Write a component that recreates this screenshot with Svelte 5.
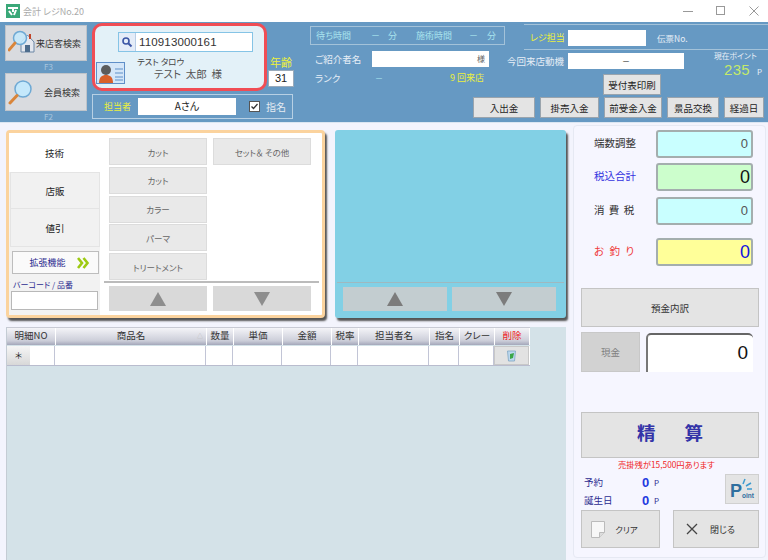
<script>
  const cols = [
    { t: '明細NO', w: 49 }, { t: '商品名', w: 151, sort: true }, { t: '数量', w: 27 }, { t: '単価', w: 49 },
    { t: '金額', w: 49 }, { t: '税率', w: 27 }, { t: '担当者名', w: 71 }, { t: '指名', w: 30 }, { t: 'クレー', w: 35 }, { t: '削除', w: 35, red: true }
  ];
  const menu = ['カット', 'カット', 'カラー', 'パーマ', 'トリートメント'];
  const bottom = [
    { t: '入出金', w: 62 }, { t: '掛売入金', w: 59 }, { t: '前受金入金', w: 58 }, { t: '景品交換', w: 52 }, { t: '経過日', w: 40 }
  ];
</script>

<div class="win">
  <div class="title">
    <svg class="appicon" width="14" height="14" viewBox="0 0 14 14"><rect width="14" height="14" fill="#3aa878"/><path d="M2 4h10M3 7l3 4M10 6l-2 5M7 3v5" stroke="#fff" stroke-width="2" fill="none"/></svg>
    <span class="ttext">会計 レジNo.20</span>
    <div class="ctrls">
      <svg width="12" height="12" viewBox="0 0 12 12"><path d="M1 6.500h10" stroke="#999"/></svg>
      <svg width="12" height="12" viewBox="0 0 12 12"><rect x="1.500" y="1.500" width="8" height="8" fill="none" stroke="#999"/></svg>
      <svg width="12" height="12" viewBox="0 0 12 12"><path d="M1.500 1.500l9 9M10.500 1.500l-9 9" stroke="#999"/></svg>
    </div>
  </div>

  <header class="head">
    <div class="c1">
      <button class="sbtn">
        <svg width="27" height="28" viewBox="0 0 27 28">
          <path d="M13 13l6.500-7 6.500 7v10H13z" fill="#e4e8ef" stroke="#6d88a6"/>
          <rect x="17" y="16" width="5" height="7" fill="#4d6c8c"/>
          <path d="M22 5v5" stroke="#c0452a" stroke-width="2"/>
          <circle cx="12" cy="9" r="6.500" fill="#c4e8fb" fill-opacity=".9" stroke="#6ea9d4" stroke-width="1.500"/>
          <path d="M7 14L1 21" stroke="#d9853a" stroke-width="2.800" stroke-linecap="round"/>
        </svg>
        <span>来店客検索</span>
      </button>
      <div class="fk">F3</div>
      <button class="sbtn second">
        <svg width="28" height="28" viewBox="0 0 28 28">
          <circle cx="15" cy="11" r="8" fill="#c4e8fb" stroke="#6ea9d4" stroke-width="1.500"/>
          <path d="M9 17.500L2 25" stroke="#d9853a" stroke-width="3" stroke-linecap="round"/>
        </svg>
        <span class="pad">会員検索</span>
      </button>
      <div class="fk">F2</div>
    </div>

    <div class="c2">
      <div class="c2top">
        <div class="card">
          <div class="search">
            <span class="lens"><svg width="12" height="12" viewBox="0 0 12 12"><circle cx="5" cy="5" r="3" fill="none" stroke="#3b55a5" stroke-width="1.600"/><path d="M7.500 7.500l3 3" stroke="#3b55a5" stroke-width="2"/></svg></span>
            <span class="num">110913000161</span>
          </div>
          <div class="who">
            <svg class="idc" width="29" height="22" viewBox="0 0 29 22">
              <rect x="0.500" y="0.500" width="28" height="21" fill="#d4e6f8" stroke="#5f8fc8"/>
              <path d="M3 21c0-6 3-8 7-8s7 2 7 8z" fill="#d8602a"/>
              <circle cx="10" cy="8" r="5" fill="#5c5c5c"/>
              <path d="M19 7h8M19 11h8M19 15h8M19 18h8" stroke="#5f8fc8" stroke-width="1.200"/>
            </svg>
            <div class="names">
              <div class="kana">テスト タロウ</div>
              <div class="kanji">テスト&nbsp;&nbsp;太郎 &nbsp;様</div>
            </div>
          </div>
        </div>
        <div class="age">
          <div class="yl agel">年齢</div>
          <div class="agev">31</div>
        </div>
      </div>
      <div class="staff">
        <span class="yl stl">担当者</span>
        <span class="staffv">Aさん</span>
        <span class="chk"><svg width="11" height="11" viewBox="0 0 11 11"><rect x="0.500" y="0.500" width="10" height="10" fill="#fff" stroke="#555"/><path d="M2.500 5.500l2 2 4-4.500" fill="none" stroke="#333" stroke-width="1.300"/></svg></span>
        <span class="shimei">指名</span>
      </div>
    </div>

    <div class="cr">
      <div class="crtop">
        <div class="c3">
          <div class="wait">
            <span class="w1">待ち時間</span><span class="w2">－</span><span class="w3">分</span>
            <span class="w4">施術時間</span><span class="w5">－</span><span class="w6">分</span>
          </div>
          <div class="intro">
            <span class="lbl">ご紹介者名</span>
            <span class="introv">様</span>
          </div>
          <div class="rank">
            <span class="lbl rk">ランク</span><span class="dash">－</span><span class="visits">9 回来店</span>
          </div>
        </div>
        <div class="c4">
          <div class="regi">
            <span class="yl reg">レジ担当</span><span class="regv"></span><span class="lbl den">伝票No.</span>
          </div>
          <div class="motive">
            <span class="lbl mo">今回来店動機</span><span class="mov">－</span>
            <div class="points">
              <div class="lbl">現在ポイント</div>
              <div class="ptv"><b>235</b><i>P</i></div>
            </div>
          </div>
          <button class="hb print">受付表印刷</button>
        </div>
      </div>
      <div class="btm">
        {#each bottom as b}<button class="hb" style="width:{b.w}px">{b.t}</button>{/each}
      </div>
    </div>
  </header>

  <main class="body">
    <div class="leftside">
      <div class="panels">
        <section class="p1">
          <div class="tabs">
            <div class="tab on">技術</div>
            <div class="tab t2">店販</div>
            <div class="tab t3">値引</div>
            <button class="ext"><span>拡張機能</span><svg width="13" height="12" viewBox="0 0 13 12"><path d="M1 1l4 5-4 5M6.500 1l4 5-4 5" fill="none" stroke="#9dca12" stroke-width="2.600"/></svg></button>
            <div class="bc">バーコード / 品番</div>
            <div class="bcin"></div>
          </div>
          <div class="menu">
            <div class="mgrid">
              <div class="mcol">{#each menu as m}<div class="mi">{m}</div>{/each}</div>
              <div class="mcol"><div class="mi">セット＆ その他</div></div>
            </div>
            <div class="arrows a1">
              <button class="ar"><span class="up"></span></button>
              <button class="ar"><span class="dn"></span></button>
            </div>
          </div>
        </section>
        <section class="p2">
          <div class="arrows a2">
            <button class="ar"><span class="up"></span></button>
            <button class="ar"><span class="dn"></span></button>
          </div>
        </section>
      </div>
      <div class="grid">
        <div class="thead">
          {#each cols as c}
            <div class="th" class:red={c.red} style="width:{c.w}px">{c.t}{#if c.sort}<em>△</em>{/if}</div>
          {/each}
        </div>
        <div class="trow">
          <div class="star">＊</div>
          <div class="td" style="width:25px"></div>
          {#each cols.slice(1, 9) as c}<div class="td" style="width:{c.w}px"></div>{/each}
          <div class="td del" style="width:35px">
            <svg width="13" height="13" viewBox="0 0 13 13"><path d="M2.500 2h8l-1 10h-6z" fill="#bcd8ee" stroke="#7fa6c4" stroke-width=".8"/><path d="M5 5l4-1-1 5-3 1z" fill="#3aa648"/></svg>
          </div>
        </div>
      </div>
    </div>

    <aside class="right">
      <div class="frow"><span class="fl">端数調整</span><div class="fv cy sm">0</div></div>
      <div class="frow r2"><span class="fl blue">税込合計</span><div class="fv gr">0</div></div>
      <div class="frow r3"><span class="fl sp1">消 費 税</span><div class="fv cy sm">0</div></div>
      <div class="frow r4"><span class="fl redt sp2">お 釣 り</span><div class="fv ye">0</div></div>

      <button class="rb dep">預金内訳</button>
      <div class="cash">
        <button class="cashb">現金</button>
        <div class="cashv">0</div>
      </div>
      <button class="rb settle"><span>精</span><span>算</span></button>
      <div class="warn">売掛残が15,500円あります</div>
      <div class="pts">
        <div class="ptl">
          <div class="pr"><span>予約</span><b>0</b><i>P</i></div>
          <div class="pr"><span>誕生日</span><b>0</b><i>P</i></div>
        </div>
        <button class="pbtn">
          <svg width="28" height="24" viewBox="0 0 28 24">
            <text x="2" y="20" font-family="Liberation Sans" font-weight="700" font-size="18" fill="#2f6f9f">P</text>
            <text x="14" y="21" font-family="Liberation Sans" font-weight="700" font-size="6.500" fill="#2f6f9f">oint</text>
            <path d="M15 7l2-5M18 9l5-3M19 12h5" stroke="#3d9bd0" stroke-width="1.500"/>
          </svg>
        </button>
      </div>
      <div class="acts">
        <button class="rb clr">
          <svg width="14" height="17" viewBox="0 0 14 17"><path d="M.5.5h13v11l-5 5h-8z" fill="#f7f7f7" stroke="#bbb"/><path d="M13.500 11.500h-5v5" fill="#ddd" stroke="#bbb"/></svg>
          <span>クリア</span>
        </button>
        <button class="rb cls">
          <svg width="12" height="12" viewBox="0 0 12 12"><path d="M1 1l10 10M11 1L1 11" stroke="#444" stroke-width="1.300"/></svg>
          <span>閉じる</span>
        </button>
      </div>
    </aside>
  </main>
</div>

<style>
  :global(body) { margin: 0; background: #fff; }
  * { box-sizing: border-box; }
  button { font: inherit; font-feature-settings: inherit; padding: 0; margin: 0; color: inherit; cursor: default; }
  .win {
    width: 768px; height: 560px; overflow: hidden; background: #f3f4fd;
    font-family: "Noto Sans CJK JP", "Liberation Sans", sans-serif; font-size: 10px; color: #333;
    font-feature-settings: "palt";
    display: flex; flex-direction: column;
  }
  .title { height: 22px; background: #fff; display: flex; align-items: center; padding-left: 6px; color: #aaa; }
  .appicon { margin-right: 3px; }
  .ttext { font-size: 9px; }
  .ctrls { margin-left: auto; display: flex; gap: 21px; padding-right: 8px; }

  .head { height: 101px; background: #6699c3; display: flex; flex: none; border-bottom: 1px solid #dbe6f2; }
  .yl { color: #ecf03c; }
  .lbl { color: #e6eef6; }
  .c1 { width: 92px; padding: 3px 0 0 5px; flex: none; }
  .sbtn {
    width: 82px; height: 36px; background: #d9dbdf; border: 1px solid #bfc4ca;
    display: flex; align-items: center; font-size: 9px; color: #333; white-space: nowrap;
  }
  .sbtn svg { flex: none; margin-left: 2px; margin-right: 1px; }
  .sbtn .pad { margin-left: 7px; }
  .second { height: 38px; }
  .fk { height: 12px; line-height: 12px; text-align: center; color: #a9c6de; font-size: 8px; }

  .c2 { width: 202px; flex: none; padding-top: 1px; }
  .c2top { display: flex; }
  .card {
    width: 176px; height: 68px; background: #e3f1f8; border: 3px solid #f04d55; border-radius: 10px;
    padding-top: 6px; display: flex; flex-direction: column;
  }
  .search {
    align-self: flex-start; margin-left: 23px; width: 135px; height: 20px; background: #fff;
    border: 1px solid #85c4e6; display: flex; align-items: center;
  }
  .lens { width: 17px; height: 18px; background: #e4ecf8; border-right: 1px solid #b8cde6; display: flex; align-items: center; justify-content: center; }
  .num { font-family: "Liberation Sans", sans-serif; font-size: 11.500px; padding-left: 3px; letter-spacing: .15px; }
  .who { display: flex; align-items: flex-end; flex: 1; padding-bottom: 4px; }
  .idc { flex: none; margin-left: 1px; }
  .names { margin-left: 12px; padding-bottom: 3px; }
  .kana { font-size: 8.500px; line-height: 10px; color: #444; }
  .kanji { font-size: 10.500px; line-height: 14px; color: #555; padding-left: 17px; margin-top: 1px; }
  .age { width: 26px; margin-left: 1px; padding-top: 32px; }
  .agel { font-size: 11px; line-height: 15px; text-align: center; }
  .agev {
    height: 17px; background: #fff; border: 1px solid #9ab; text-align: center; font-family: "Liberation Sans", sans-serif;
    font-size: 11px; line-height: 15px; color: #222;
  }
  .staff {
    margin-top: 3px; width: 201px; height: 25px; border: 1px solid #b7d0e4; display: flex; align-items: center;
    padding-left: 11px; font-size: 10px;
  }
  .stl { font-size: 9px; }
  .staffv { width: 98px; height: 17px; margin-left: 7px; background: #fff; text-align: center; line-height: 16px; color: #222; }
  .chk { margin-left: 13px; height: 11px; display: block; line-height: 0; }
  .shimei { margin-left: 6px; color: #e4ebf2; }

  .cr { margin-left: 16px; flex: 1; display: flex; flex-direction: column; min-width: 0; }
  .crtop { height: 75px; display: flex; }
  .c3 { width: 195px; flex: none; padding-top: 4px; }
  .wait {
    height: 19px; border: 1px solid #a3c2d9; display: flex; align-items: center; color: #a9e4ee; font-size: 9px; white-space: nowrap;
  }
  .wait span { display: block; flex: none; }
  .w1 { margin-left: 5px; width: 55px; }
  .w2 { width: 17px; }
  .w3 { width: 28px; }
  .w4 { width: 53px; }
  .w5 { width: 18px; }
  .w6 { width: 12px; }
  .intro { display: flex; margin-top: 6px; align-items: center; height: 16px; }
  .intro .lbl { margin-left: 5px; width: 57px; font-size: 9.500px; }
  .introv { width: 117px; height: 16px; background: #fff; text-align: right; padding-right: 4px; font-size: 8px; line-height: 16px; color: #666; }
  .rank { display: flex; margin-top: 3px; height: 15px; align-items: center; }
  .rk { margin-left: 5px; width: 60px; font-size: 9.500px; }
  .dash { width: 75px; color: #a9e4ee; font-size: 8px; }
  .visits { color: #ecf03c; font-size: 9px; white-space: nowrap; }
  .c4 { margin-left: 2px; flex: 1; position: relative; border-top: 1px solid transparent; min-width: 0; }
  .regi {
    height: 26px; margin-left: 17px; margin-top: 1px; padding-top: 5px; display: flex; align-items: flex-start;
    border-top: 1px solid #a3c2d9; border-bottom: 1px solid #a3c2d9;
  }
  .reg { margin-left: 6px; width: 38px; height: 16px; line-height: 16px; font-size: 9px; white-space: nowrap; }
  .regv { width: 78px; height: 16px; background: #fff; display: block; }
  .den { margin-left: 11px; font-size: 8.500px; line-height: 16px; }
  .motive { display: flex; height: 22px; padding-top: 3px; align-items: flex-start; }
  .mo { width: 61px; font-size: 9.500px; line-height: 16px; white-space: nowrap; }
  .mov { width: 116px; height: 16px; background: #fff; text-align: center; line-height: 16px; font-size: 8px; color: #333; }
  .points { margin-left: 30px; margin-top: -3px; text-align: left; white-space: nowrap; width: 50px; position: relative; z-index: 1; }
  .points .lbl { font-size: 7.800px; line-height: 11px; }
  .ptv { line-height: 14px; padding-left: 10px; }
  .ptv b { font: 400 15px "Liberation Sans", sans-serif; color: #c4e96a; letter-spacing: .3px; }
  .ptv i { font-style: normal; color: #e6eef6; font-size: 8px; margin-left: 7px; }
  .hb {
    height: 21px; background: #e4e4e4; border: 1px solid #9aa4ad; font-size: 9.500px; color: #222; flex: none; white-space: nowrap;
  }
  .print { display: block; width: 58px; margin-left: 96px; margin-top: 2px; }
  .btm { display: flex; justify-content: flex-end; gap: 5px; padding-right: 4px; }

  .body { flex: 1; display: flex; min-height: 0; }
  .leftside { width: 573px; flex: none; display: flex; flex-direction: column; }
  .panels { display: flex; padding: 7px 0 0 6px; gap: 10px; height: 204px; flex: none; }
  .p1 {
    width: 319px; height: 188px; border: 3px solid #fbd39e; border-radius: 4px; background: #fff; display: flex;
    box-shadow: 2px 3px 2px #555;
  }
  .tabs { width: 92px; flex: none; background: #f2f2f2; display: flex; flex-direction: column; border-right: 1px solid #fff; }
  .tab { display: flex; align-items: center; justify-content: center; font-size: 9.500px; color: #222; }
  .on { height: 39px; background: #fff; }
  .t2, .t3 { height: 37px; margin-left: 1px; background: #f1f1f1; border: 1px solid #e4e4e4; }
  .t3 { height: 38px; border-top: 0; }
  .ext {
    margin: 4px 0 0 3px; width: 87px; height: 23px; background: #fafafa; border: 1px solid #bdbdbd; display: flex; align-items: center;
    justify-content: center; color: #2c2c90; font-size: 9px; gap: 11px; padding-left: 8px;
  }
  .bc { margin: 4px 0 0 4px; color: #2c2c90; font-size: 8px; line-height: 13px; white-space: nowrap; }
  .bcin { margin: 0 0 0 2px; width: 87px; height: 19px; background: #fff; border: 1px solid #b8b8b8; }
  .menu { flex: 1; display: flex; flex-direction: column; padding: 5px 3px 0 3px; }
  .mgrid { display: flex; gap: 6px; height: 145px; padding-left: 5px; border-bottom: 2px solid #bbb; }
  .mcol { width: 98px; display: flex; flex-direction: column; gap: 1.800px; }
  .mi {
    height: 27px; background: #e9e9e9; border: 1px solid #dcdcdc; display: flex; align-items: center; justify-content: center;
    font-size: 8.500px; color: #666; white-space: nowrap;
  }
  .arrows { display: flex; gap: 6px; }
  .ar { background: #d9d9d9; border: 0; display: flex; align-items: center; justify-content: center; }
  .a1 { padding: 3px 0 0 5px; }
  .a1 .ar { width: 98px; height: 25px; }
  .up { width: 0; height: 0; border-left: 8.500px solid transparent; border-right: 8.500px solid transparent; border-bottom: 14px solid #8e8e8e; }
  .dn { width: 0; height: 0; border-left: 8.500px solid transparent; border-right: 8.500px solid transparent; border-top: 14px solid #8e8e8e; }
  .p2 {
    width: 231px; height: 188px; border-radius: 3px; background: #82d0e5; box-shadow: 2px 3px 2px #555;
    display: flex; flex-direction: column; justify-content: flex-end; padding: 0 2px 7px;
  }
  .a2 { border-top: 1px solid #9fb8bf; padding: 4px 0 0 6px; gap: 5px; }
  .a2 .ar { width: 104px; height: 24px; background: #c3cdd0; }
  .a2 .up, .a2 .dn { border-bottom-color: #7c7c7c; border-top-color: #7c7c7c; }

  .grid { margin-left: 6px; width: 560px; flex: 1; background: #d4e2e8; border-left: 1px solid #c4ccd4; }
  .thead {
    height: 18px; display: flex; background: linear-gradient(#f4f4f8, #ccced9 75%, #a4a7ba); border-top: 1px solid #c8cad4;
    width: 523px;
  }
  .th {
    flex: none; border-right: 1px solid #fff; text-align: center; font-size: 9.500px; line-height: 15px; color: #333;
    position: relative; white-space: nowrap;
  }
  .th em { position: absolute; right: 3px; top: 0; font-style: normal; font-size: 6px; color: #bbb; }
  .red { color: #ee2222; }
  .trow { display: flex; height: 20px; margin-top: 1px; width: 523px; background: #fff; border-bottom: 1px solid #b9bcce; }
  .star { width: 23px; flex: none; background: linear-gradient(#f6f6f6, #d8d8d8); text-align: center; line-height: 19px; font-size: 9px; color: #222; }
  .td { flex: none; border-right: 1px solid #c2c5d6; }
  .del { background: #e2e2e2; border: 1px solid #c8c8c8; display: flex; align-items: center; justify-content: center; }

  .right {
    flex: 1; margin: 2px 2px 2px 0; background: #f6f6ff; border: 1px solid #e6e9f3; border-radius: 4px;
    padding: 4px 0 0 7px;
  }
  .frow { display: flex; align-items: center; height: 28px; }
  .r2 { margin-top: 5px; }
  .r3 { margin-top: 6px; }
  .r4 { margin-top: 13px; }
  .fl { width: 75px; padding: 0 0 3px 13px; font-size: 10.500px; color: #333; white-space: nowrap; }
  .sp1 { letter-spacing: 1px; }
  .sp2 { letter-spacing: 1.500px; }
  .blue { color: #3434e0; }
  .redt { color: #f03838; }
  .fv {
    width: 97px; height: 28px; border: 2px solid #a4aeae; border-radius: 3px; text-align: right; padding-right: 1px; font: 400 18px/24px "Liberation Sans", sans-serif; color: #111;
  }
  .cy { background: #c9ffff; }
  .gr { background: #ccfecc; }
  .ye { background: #ffff99; color: #1212e0; }
  .sm { font-size: 13px; color: #555; padding-right: 3px; }
  .rb { background: #e4e4e4; border: 1px solid #c4c4c4; display: flex; align-items: center; justify-content: center; color: #333; }
  .dep { width: 178px; height: 39px; margin-top: 22px; font-size: 9.500px; }
  .cash { display: flex; gap: 6px; margin-top: 5px; }
  .cashb { width: 59px; height: 40px; background: #d2d2d2; border: 1px solid #c8c8c8; font-size: 9.500px; color: #808080; }
  .cashv {
    width: 107px; height: 39px; margin-top: 1px; background: #fff; border-radius: 5px 5px 0 0; border-top: 2px solid #666; border-left: 2px solid #777;
    text-align: right; padding-right: 5px; font: 400 19px/36px "Liberation Sans", sans-serif; color: #111;
  }
  .settle { width: 178px; height: 46px; margin-top: 40px; font-size: 18.500px; font-weight: 700; color: #3434a8; gap: 29px; padding-bottom: 6px; }
  .warn { color: #f01e1e; font-size: 8.300px; line-height: 12px; padding-left: 37px; white-space: nowrap; }
  .pts { display: flex; height: 35px; margin-top: 4px; }
  .ptl { width: 144px; padding-left: 3px; }
  .pr { display: flex; height: 18px; align-items: center; color: #2c2c90; font-size: 9.500px; margin-top: -1px; margin-bottom: 1px; }
  .pr span { width: 58px; }
  .pr b { font: 700 13px "Liberation Sans", sans-serif; color: #1e3ae0; width: 12px; }
  .pr i { font-style: normal; font-size: 8px; color: #2c2c90; }
  .pbtn { width: 34px; height: 30px; background: #e4e4e4; border: 1px solid #d0d0d0; display: flex; align-items: center; justify-content: center; }
  .acts { display: flex; gap: 13px; margin-top: 1px; }
  .clr { width: 79px; height: 38px; gap: 10px; font-size: 8.500px; padding-right: 12px; }
  .cls { width: 86px; height: 38px; gap: 12px; font-size: 9px; padding-right: 11px; }
</style>
